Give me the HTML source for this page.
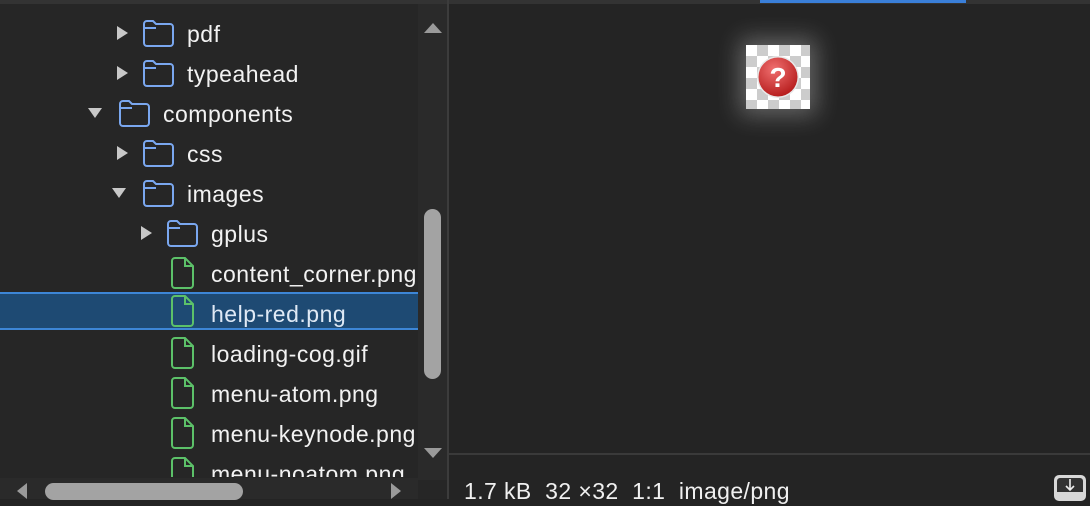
<!DOCTYPE html>
<html><head><meta charset="utf-8"><style>
*{margin:0;padding:0;box-sizing:border-box}
body{width:1090px;height:499px;background:#242424;position:relative;overflow:hidden;font-family:"Liberation Sans",sans-serif;color:#f2f2f2}
.left{position:absolute;left:0;top:0;width:448px;height:499px;background:#262626}
.topl{position:absolute;left:0;top:0;width:1090px;height:4px;background:#333}
.list{position:absolute;left:0;top:4px;width:418px;height:473px;overflow:hidden}
.row{position:absolute;left:0;width:418px;height:40px;font-size:23px;letter-spacing:.5px;line-height:40px}
.row span{position:absolute;top:1px;white-space:nowrap}
.sel{background:#1e4a73;border-top:2px solid #3d86d6;border-bottom:2px solid #3d86d6}
svg{position:absolute}
</style></head><body>
<div class="left">
<div class="list">
<div class="row" style="top:9px"><svg style="left:116px;top:12px" width="12" height="16"><path d="M1 1L12 8L1 15Z" fill="#c8c8c8"/></svg><svg style="left:142px;top:6px" width="34" height="30"><path d="M2 5a3 3 0 0 1 3-3h6l3 3h14a3 3 0 0 1 3 3v16a3 3 0 0 1-3 3H5a3 3 0 0 1-3-3Z M2 9h12" fill="none" stroke="#7aa7ef" stroke-width="2"/></svg><span style="left:187px">pdf</span></div>
<div class="row" style="top:49px"><svg style="left:116px;top:12px" width="12" height="16"><path d="M1 1L12 8L1 15Z" fill="#c8c8c8"/></svg><svg style="left:142px;top:6px" width="34" height="30"><path d="M2 5a3 3 0 0 1 3-3h6l3 3h14a3 3 0 0 1 3 3v16a3 3 0 0 1-3 3H5a3 3 0 0 1-3-3Z M2 9h12" fill="none" stroke="#7aa7ef" stroke-width="2"/></svg><span style="left:187px">typeahead</span></div>
<div class="row" style="top:89px"><svg style="left:87px;top:14px" width="16" height="12"><path d="M1 1L15 1L8 11Z" fill="#c8c8c8"/></svg><svg style="left:118px;top:6px" width="34" height="30"><path d="M2 5a3 3 0 0 1 3-3h6l3 3h14a3 3 0 0 1 3 3v16a3 3 0 0 1-3 3H5a3 3 0 0 1-3-3Z M2 9h12" fill="none" stroke="#7aa7ef" stroke-width="2"/></svg><span style="left:163px">components</span></div>
<div class="row" style="top:129px"><svg style="left:116px;top:12px" width="12" height="16"><path d="M1 1L12 8L1 15Z" fill="#c8c8c8"/></svg><svg style="left:142px;top:6px" width="34" height="30"><path d="M2 5a3 3 0 0 1 3-3h6l3 3h14a3 3 0 0 1 3 3v16a3 3 0 0 1-3 3H5a3 3 0 0 1-3-3Z M2 9h12" fill="none" stroke="#7aa7ef" stroke-width="2"/></svg><span style="left:187px">css</span></div>
<div class="row" style="top:169px"><svg style="left:111px;top:14px" width="16" height="12"><path d="M1 1L15 1L8 11Z" fill="#c8c8c8"/></svg><svg style="left:142px;top:6px" width="34" height="30"><path d="M2 5a3 3 0 0 1 3-3h6l3 3h14a3 3 0 0 1 3 3v16a3 3 0 0 1-3 3H5a3 3 0 0 1-3-3Z M2 9h12" fill="none" stroke="#7aa7ef" stroke-width="2"/></svg><span style="left:187px">images</span></div>
<div class="row" style="top:209px"><svg style="left:140px;top:12px" width="12" height="16"><path d="M1 1L12 8L1 15Z" fill="#c8c8c8"/></svg><svg style="left:166px;top:6px" width="34" height="30"><path d="M2 5a3 3 0 0 1 3-3h6l3 3h14a3 3 0 0 1 3 3v16a3 3 0 0 1-3 3H5a3 3 0 0 1-3-3Z M2 9h12" fill="none" stroke="#7aa7ef" stroke-width="2"/></svg><span style="left:211px">gplus</span></div>
<div class="row" style="top:249px"><svg style="left:171px;top:4px" width="24" height="32"><path d="M4 1h10l8 8v19a3 3 0 0 1-3 3H4a3 3 0 0 1-3-3V4a3 3 0 0 1 3-3Z M14 1v8h8" fill="none" stroke="#5cc169" stroke-width="2"/></svg><span style="left:211px">content_corner.png</span></div>
<div class="row sel" style="top:288px;height:38px;line-height:34px"><svg style="left:171px;top:1px" width="24" height="32"><path d="M4 1h10l8 8v19a3 3 0 0 1-3 3H4a3 3 0 0 1-3-3V4a3 3 0 0 1 3-3Z M14 1v8h8" fill="none" stroke="#5cc169" stroke-width="2"/></svg><span style="left:211px;top:3px;color:#dfe9f5">help-red.png</span></div>
<div class="row" style="top:329px"><svg style="left:171px;top:4px" width="24" height="32"><path d="M4 1h10l8 8v19a3 3 0 0 1-3 3H4a3 3 0 0 1-3-3V4a3 3 0 0 1 3-3Z M14 1v8h8" fill="none" stroke="#5cc169" stroke-width="2"/></svg><span style="left:211px">loading-cog.gif</span></div>
<div class="row" style="top:369px"><svg style="left:171px;top:4px" width="24" height="32"><path d="M4 1h10l8 8v19a3 3 0 0 1-3 3H4a3 3 0 0 1-3-3V4a3 3 0 0 1 3-3Z M14 1v8h8" fill="none" stroke="#5cc169" stroke-width="2"/></svg><span style="left:211px">menu-atom.png</span></div>
<div class="row" style="top:409px"><svg style="left:171px;top:4px" width="24" height="32"><path d="M4 1h10l8 8v19a3 3 0 0 1-3 3H4a3 3 0 0 1-3-3V4a3 3 0 0 1 3-3Z M14 1v8h8" fill="none" stroke="#5cc169" stroke-width="2"/></svg><span style="left:211px">menu-keynode.png</span></div>
<div class="row" style="top:449px"><svg style="left:171px;top:4px" width="24" height="32"><path d="M4 1h10l8 8v19a3 3 0 0 1-3 3H4a3 3 0 0 1-3-3V4a3 3 0 0 1 3-3Z M14 1v8h8" fill="none" stroke="#5cc169" stroke-width="2"/></svg><span style="left:211px">menu-noatom.png</span></div>
</div>
<div style="position:absolute;left:418px;top:4px;width:30px;height:476px;background:#2a2a2a"></div>
<svg style="left:423px;top:22px" width="20" height="12"><path d="M1 11L10 1L19 11Z" fill="#9a9a9a"/></svg>
<div style="position:absolute;left:424px;top:209px;width:17px;height:170px;border-radius:9px;background:#a3a3a3"></div>
<svg style="left:423px;top:447px" width="20" height="12"><path d="M1 1L19 1L10 11Z" fill="#9a9a9a"/></svg>
<div style="position:absolute;left:0;top:478px;width:418px;height:21px;background:#2a2a2a"></div>
<svg style="left:16px;top:483px" width="12" height="16"><path d="M11 0L1 8L11 16Z" fill="#9a9a9a"/></svg>
<div style="position:absolute;left:45px;top:483px;width:198px;height:17px;border-radius:9px;background:#a3a3a3"></div>
<svg style="left:390px;top:483px" width="12" height="16"><path d="M1 0L11 8L1 16Z" fill="#9a9a9a"/></svg>
</div>
<div class="topl"></div>
<div style="position:absolute;left:760px;top:0;width:206px;height:3px;background:#3a7fd9"></div>
<div style="position:absolute;left:447px;top:0;width:2px;height:499px;background:#3c3c3c"></div>
<div style="position:absolute;left:746px;top:45px;width:64px;height:64px;box-shadow:0 0 22px 6px rgba(255,255,255,0.3);background-color:#fff;background-image:linear-gradient(45deg,#ccc 25%,transparent 25%,transparent 75%,#ccc 75%),linear-gradient(45deg,#ccc 25%,transparent 25%,transparent 75%,#ccc 75%);background-size:22px 22px;background-position:0 0,11px 11px"></div>
<svg style="left:756px;top:55px" width="44" height="44"><defs><radialGradient id="g" cx="40%" cy="30%" r="70%"><stop offset="0" stop-color="#f07070"/><stop offset="1" stop-color="#b81f1f"/></radialGradient></defs><circle cx="22" cy="22" r="21" fill="#e8e8e8"/><circle cx="22" cy="22" r="19.5" fill="url(#g)"/><text x="22" y="32" text-anchor="middle" font-family="Liberation Sans" font-weight="bold" font-size="28" fill="#fff">?</text></svg>
<div style="position:absolute;left:449px;top:453px;width:641px;height:2px;background:#3a3a3a"></div>
<div style="position:absolute;left:464px;top:476px;font-size:23px;letter-spacing:.4px;line-height:30px;color:#f0f0f0;white-space:pre">1.7 kB  32 ×32  1:1  image/png</div>
<div style="position:absolute;left:1054px;top:475px;width:32px;height:26px;border-radius:5px;background:#d8d8d8"><div style="position:absolute;left:3px;top:3px;width:26px;height:14px;background:#333;border-radius:3px 3px 0 0"></div><svg style="left:9px;top:3px" width="14" height="16"><path d="M7 1v11M3 8l4 4 4-4" fill="none" stroke="#eee" stroke-width="1.6"/></svg></div>
</body></html>
